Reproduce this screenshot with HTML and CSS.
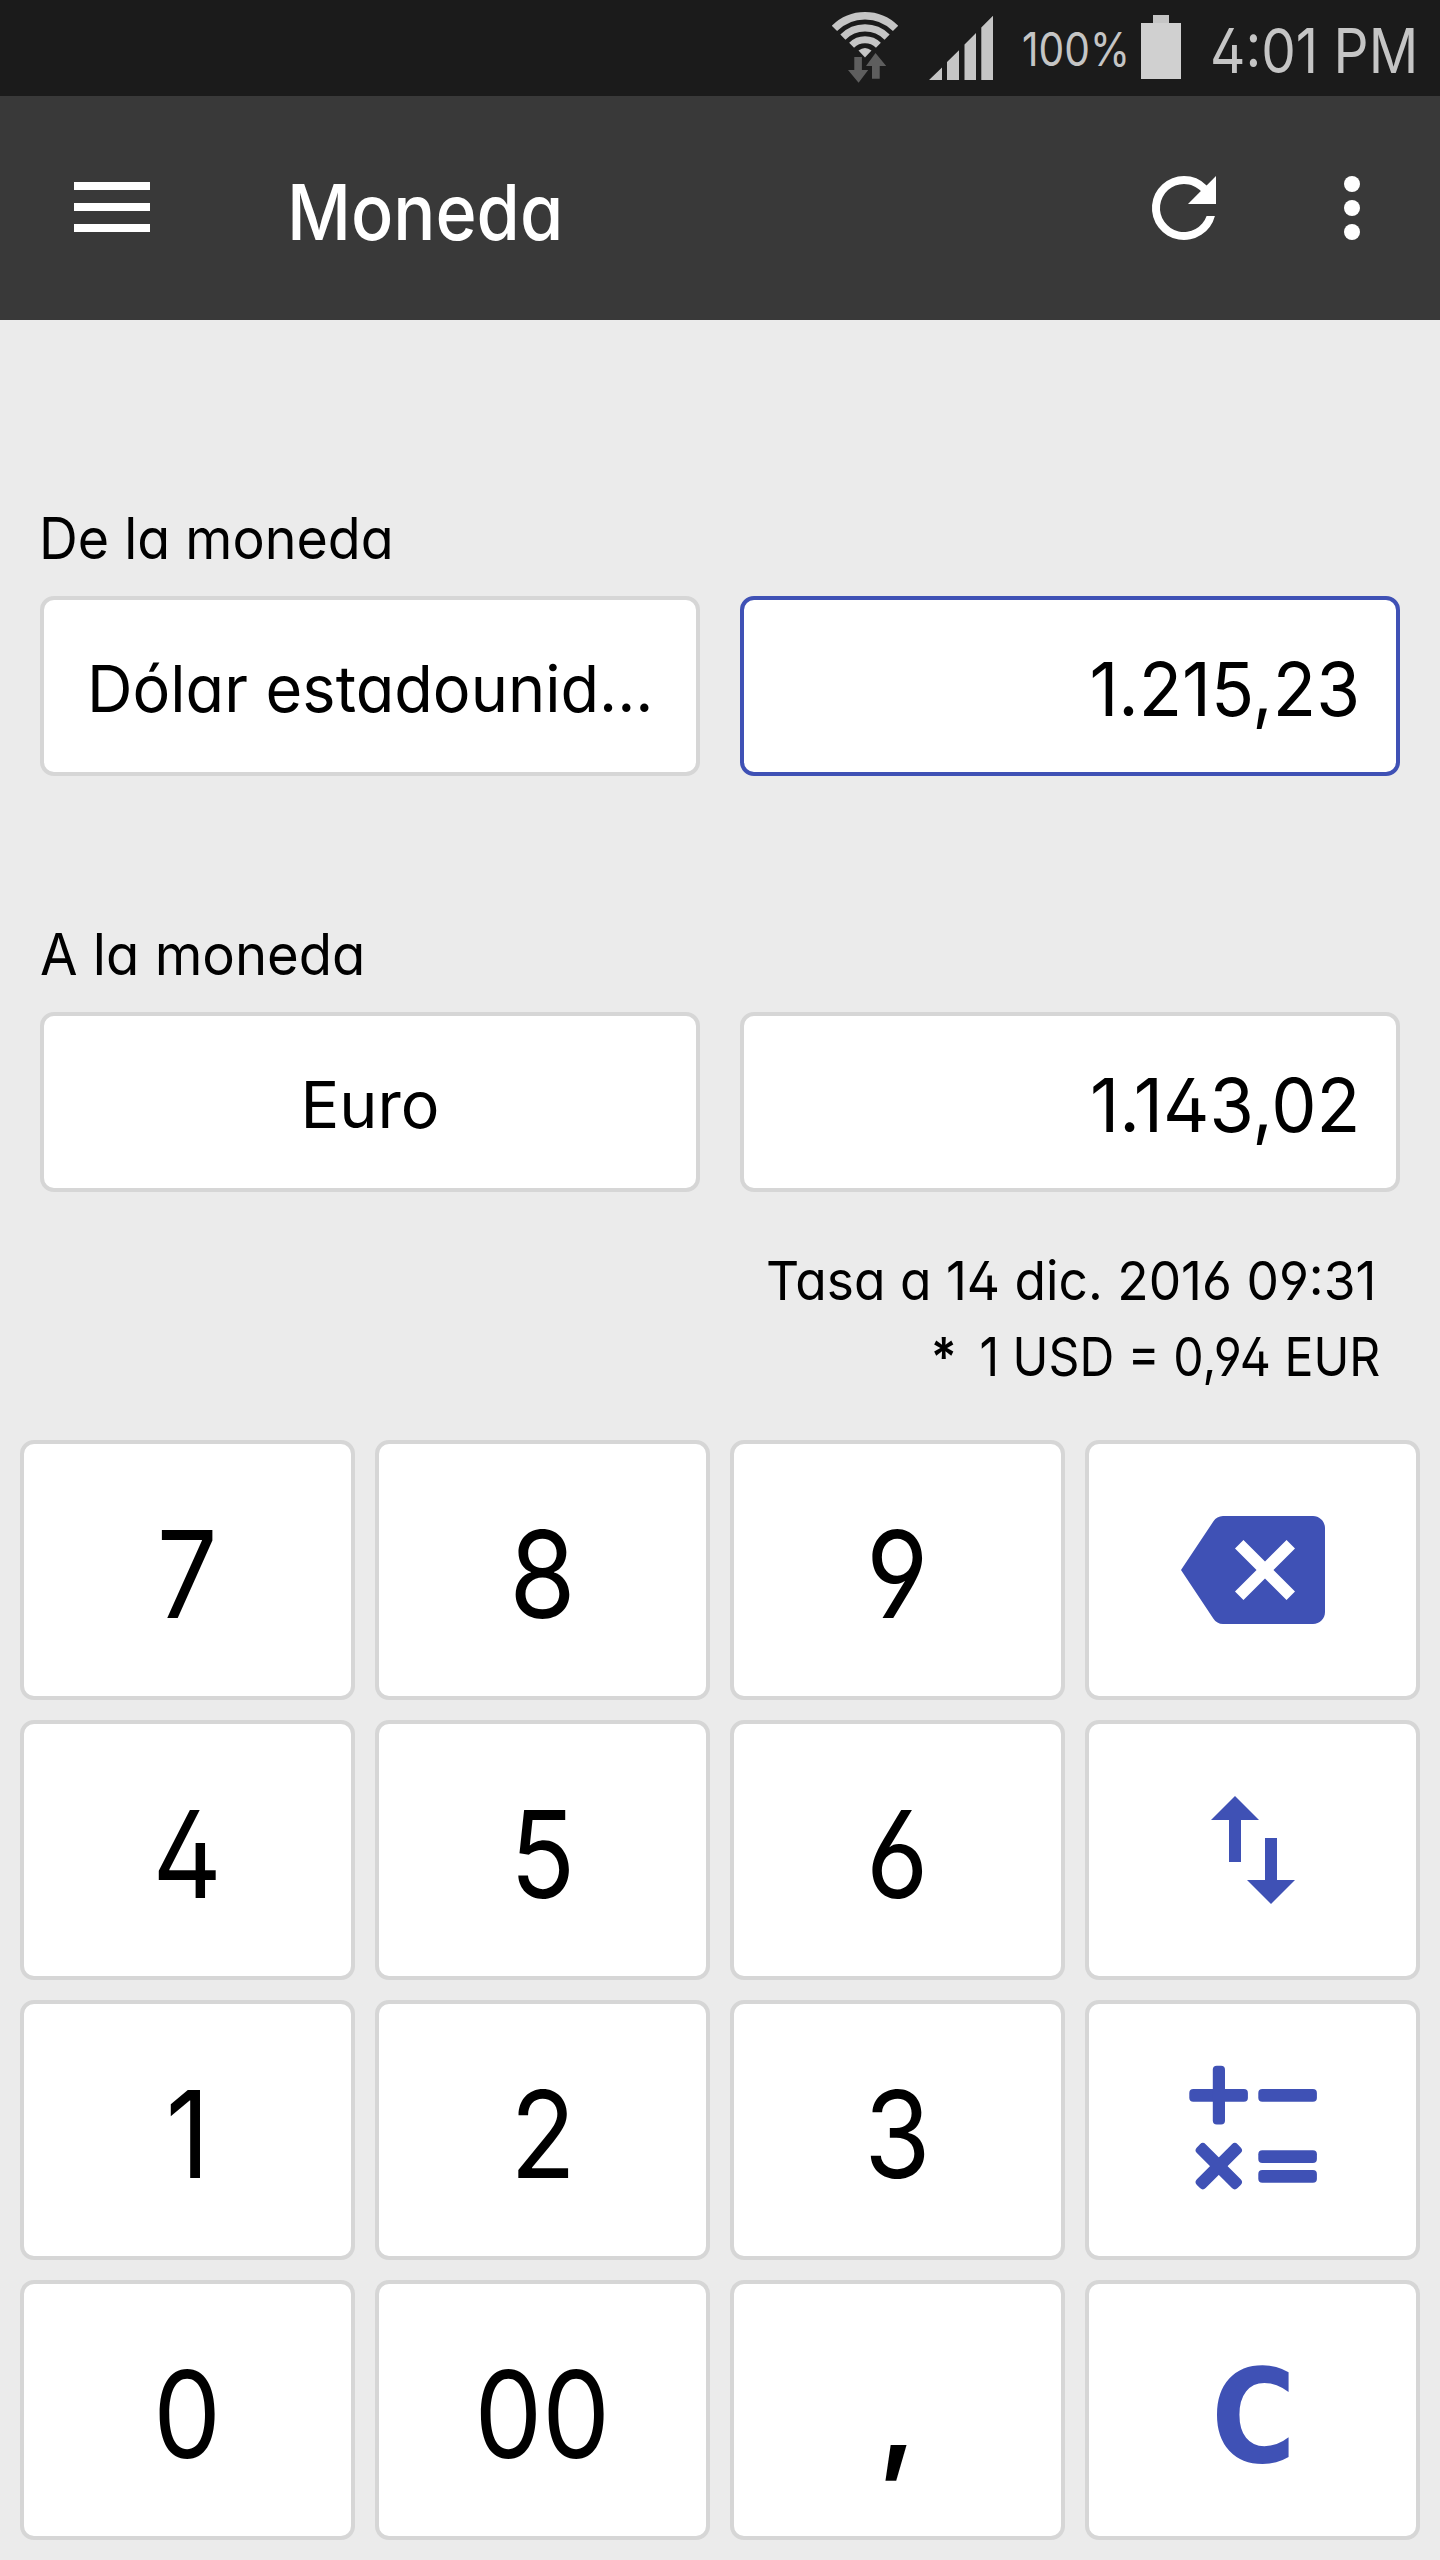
FILE: index.html
```html
<!DOCTYPE html>
<html lang="es">
<head>
<meta charset="utf-8">
<title>Moneda</title>
<link rel="stylesheet" href="styles.css">
</head>
<body>
<div class="status-bar">
  <svg class="wifi" width="66" height="74" viewBox="832 10 66 74">
    <g fill="none" stroke="#c5c5c5">
      <path stroke-width="7.5" d="M834.4 28.4A43.2 43.2 0 0 1 895.6 28.4"/>
      <path stroke-width="7.2" d="M842.9 37.1A31.2 31.2 0 0 1 887.1 37.1"/>
      <path stroke-width="7" d="M851.6 45.3A19.2 19.2 0 0 1 878.4 45.3"/>
    </g>
    <path fill="#c5c5c5" d="M865 57.5L858.5 50.5Q865 45.5 871.5 50.5z"/>
    <path fill="#5e5e5e" d="M854.3 57h7.6v13h6.3l-9.6 12.7L848 70h6.3zM872 78.7h7.7V66h6.5L875.5 53 866 66h6z"/>
  </svg>
  <svg class="signal" width="65" height="66" viewBox="929 15 65 66">
    <path fill="#c5c5c5" d="M929 80L942 67.5V80zM947 80V62L959 50.3V80zM964.5 80V44.5L976 33V80zM981.3 80V27.5L993 15.7V80z"/>
  </svg>
  <div class="percent"><span class="fit">100%</span></div>
  <svg class="battery" width="40" height="64" viewBox="0 0 40 64">
    <path fill="#c5c5c5" d="M12 0h16v8H12z"/><path fill="#d0d0d0" d="M0 8h40v56H0z"/>
  </svg>
  <div class="time"><span class="fit">4:01 PM</span></div>
</div>
<header class="app-bar">
  <svg class="menu" width="76" height="50" viewBox="0 0 76 50"><path fill="#fff" d="M0 0h76v8H0zM0 21h76v8H0zM0 42h76v8H0z"/></svg>
  <h1 class="title"><span class="fit">Moneda</span></h1>
  <svg class="refresh" width="96" height="96" viewBox="0 0 24 24"><path fill="#fff" d="M17.65 6.35A7.96 7.96 0 0 0 12 4a8 8 0 1 0 7.73 10h-2.08A6 6 0 1 1 12 6c1.66 0 3.14.69 4.22 1.78L13 11h7V4z"/></svg>
  <svg class="more" width="96" height="96" viewBox="0 0 24 24"><g fill="#fff"><circle cx="12" cy="6" r="2"/><circle cx="12" cy="12" r="2"/><circle cx="12" cy="18" r="2"/></g></svg>
</header>
<main class="converter">
  <section class="currency">
    <div class="label"><span class="fit fit-from">De la moneda</span></div>
    <div class="fields">
      <div class="box name"><span class="fit fit-dollar">Dólar estadounid...</span></div>
      <div class="box amount active"><span class="fit fit-in">1.215,23</span></div>
    </div>
  </section>
  <section class="currency second">
    <div class="label"><span class="fit fit-to">A la moneda</span></div>
    <div class="fields">
      <div class="box name"><span class="fit">Euro</span></div>
      <div class="box amount"><span class="fit fit-out">1.143,02</span></div>
    </div>
  </section>
  <div class="rate">
    <div class="rate-date"><span class="fit">Tasa a 14 dic. 2016 09:31</span></div>
    <div class="rate-value"><span class="fit"><span class="star">*</span> 1 USD = 0,94 EUR</span></div>
  </div>
</main>
<div class="keypad">
  <div class="key"><span class="fit">7</span></div>
  <div class="key"><span class="fit">8</span></div>
  <div class="key"><span class="fit">9</span></div>
  <div class="key icon"><svg width="144" height="144" viewBox="0 0 24 24"><path fill="#3f51b5" d="M22 3H7c-.69 0-1.23.35-1.59.88L0 12l5.41 8.11c.36.53.9.89 1.59.89h15c1.1 0 2-.9 2-2V5c0-1.1-.9-2-2-2zm-3 12.59L17.59 17 14 13.41 10.41 17 9 15.59 12.59 12 9 8.41 10.41 7 14 10.59 17.59 7 19 8.41 15.41 12 19 15.59z"/></svg></div>
  <div class="key"><span class="fit">4</span></div>
  <div class="key"><span class="fit">5</span></div>
  <div class="key"><span class="fit">6</span></div>
  <div class="key icon"><svg width="144" height="144" viewBox="0 0 24 24"><path fill="#3f51b5" d="M9 3L5 6.99h3V14h2V6.99h3L9 3zm7 14.01V10h-2v7.01h-3L15 21l4-3.99h-3z"/></svg></div>
  <div class="key"><span class="fit">1</span></div>
  <div class="key"><span class="fit">2</span></div>
  <div class="key"><span class="fit">3</span></div>
  <div class="key icon"><svg width="144" height="144" viewBox="1181 2058 144 144"><g fill="#3f51b5">
    <rect x="1189.3" y="2089" width="58.6" height="12.7" rx="4"/>
    <rect x="1212.8" y="2065.7" width="12.2" height="58.8" rx="4"/>
    <rect x="1258.3" y="2089" width="58.6" height="12.7" rx="4"/>
    <rect x="1258.3" y="2150.2" width="58.6" height="12.7" rx="4"/>
    <rect x="1258.3" y="2170" width="58.6" height="12.7" rx="4"/>
    <g transform="translate(1218.8 2166.2) rotate(45)"><rect x="-28.8" y="-6.2" width="57.6" height="12.4" rx="4"/><rect x="-6.2" y="-28.8" width="12.4" height="57.6" rx="4"/></g>
  </g></svg></div>
  <div class="key"><span class="fit">0</span></div>
  <div class="key"><span class="fit">00</span></div>
  <div class="key"><span class="fit comma">,</span></div>
  <div class="key clear"><span class="fit">C</span></div>
</div>
</body>
</html>
```
FILE: styles.css
```css
* { box-sizing: border-box; }
body {
  margin: 0;
  width: 1440px;
  height: 2560px;
  background: #ebebeb;
  color: #000;
  font-family: Inter, "Liberation Sans", sans-serif;
  font-feature-settings: "cv11", "cv02", "cv03", "cv04";
  white-space: nowrap;
  overflow: hidden;
}
svg { display: block; flex: none; }
.fit { display: inline-block; transform-origin: left center; }

.status-bar {
  height: 96px;
  background: #1b1b1b;
  color: #c5c5c5;
  display: flex;
  align-items: flex-start;
  justify-content: flex-end;
  padding-right: 20px;
}
.wifi { margin-top: 10px; }
.signal { margin: 15px 0 0 31px; }
.percent { width: 106px; margin: 1px 0 0 28px; font-size: 46.8px; line-height: 96px; }
.percent .fit { transform: scaleX(.87); }
.battery { margin: 15px 0 0 13px; }
.time { width: 210px; margin: 3px 0 0 29px; font-size: 62px; line-height: 96px; }
.time .fit { transform: scaleX(.885); }

.app-bar {
  height: 224px;
  background: #393939;
  color: #fff;
  display: flex;
  align-items: center;
  padding: 0 40px 0 74px;
}
.menu { margin-top: -2px; }
.title { flex: 1; margin: 7px 0 0 137px; font-size: 77px; line-height: 100px; font-weight: 500; }
.title .fit { transform: scaleX(.91); }
.refresh { margin-right: 72px; }

.converter { padding: 176px 40px 0; height: 1120px; }
.label { height: 100px; font-size: 57.4px; line-height: 85px; }
.label .fit { margin-left: -1px; }
.second { margin-top: 136px; }
.fields { display: flex; gap: 40px; }
.box {
  width: 660px;
  height: 180px;
  padding-top: 5px;
  border: 4px solid #d6d6d6;
  border-radius: 14px;
  background: #fff;
  display: flex;
  align-items: center;
  font-size: 64.6px;
}
.name { justify-content: center; }
.name .fit { transform-origin: center; }
.amount { justify-content: flex-end; padding: 7px 36px 0 0; font-size: 73.8px; }
.amount .fit { transform-origin: right; }
.active { border-color: #3f51b5; }
.label .fit-from { transform: scaleX(.937); }
.label .fit-to { margin-left: 0; transform: scaleX(.948); }
.name .fit-dollar { transform: scaleX(.976); }
.fit-in { transform: scaleX(.963); }
.fit-out { transform: scaleX(.975); }
.rate { padding-top: 51px; text-align: right; font-size: 54px; line-height: 76px; }
.rate .fit { transform-origin: right; }
.rate-date { padding-right: 24px; }
.rate-date .fit { transform: scaleX(.953); }
.rate-value { padding-right: 20px; }
.rate-value .fit { transform: scaleX(.893); }
.star { margin-right: 10px; font-weight: 600; }

.keypad {
  display: grid;
  grid-template-columns: repeat(4, 335px);
  grid-auto-rows: 260px;
  gap: 20px;
  padding: 0 20px;
}
.key {
  padding-top: 8px;
  border: 4px solid #d6d6d6;
  border-radius: 14px;
  background: #fff;
  display: flex;
  align-items: center;
  justify-content: center;
  font-size: 121px;
}
.key .fit { transform-origin: center; transform: scaleX(.888); }
.key .comma { font-weight: 600; transform: none; }
.icon { padding-top: 0; }
.clear {
  padding: 14px 0 0 3px;
  color: #3f51b5;
  font: bold 130px/150px "DejaVu Sans", sans-serif;
}
```
